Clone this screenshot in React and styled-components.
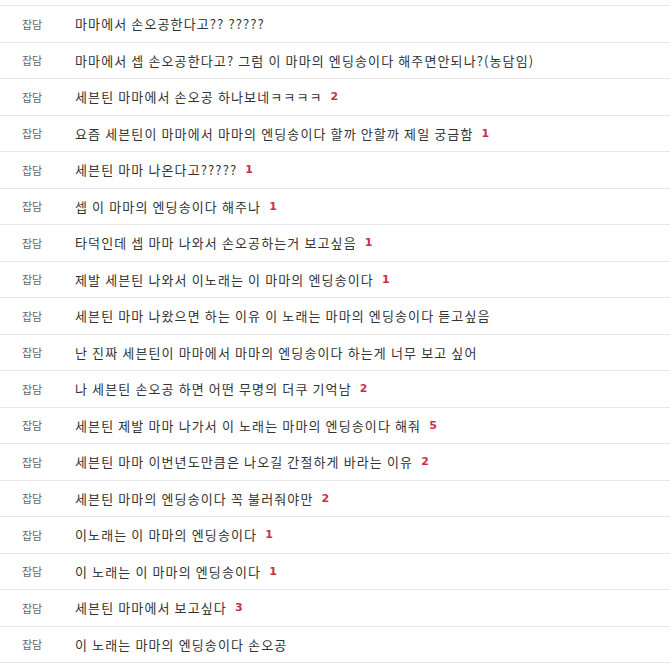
import React from "react";
import styled, { createGlobalStyle } from "styled-components";

const Global = createGlobalStyle`
  html, body { margin: 0; padding: 0; background: #fff; }
  body { font-family: "Noto Sans CJK KR", "Noto Sans", sans-serif; }
`;

const List = styled.ul`
  list-style: none;
  margin: 5px 0 0;
  padding: 0;
  width: 670px;
  border-bottom: 1px solid #e6e6e6;
`;

const Row = styled.li`
  display: flex;
  align-items: center;
  height: 35.5px;
  border-top: 1px solid #e6e6e6;
`;

const Category = styled.span`
  flex: 0 0 64px;
  text-align: center;
  font-size: 11px;
  color: #666;
`;

const Title = styled.a`
  margin-left: 11px;
  font-size: 13px;
  letter-spacing: 1.12px;
  color: #333;
  text-decoration: none;
  white-space: nowrap;
`;

const Count = styled.span`
  margin-left: 8px;
  font-family: "DejaVu Sans", sans-serif;
  font-weight: bold;
  font-size: 11px;
  color: #c8304a;
`;

const rows = [
  ["마마에서 손오공한다고?? ?????"],
  ["마마에서 셉 손오공한다고? 그럼 이 마마의 엔딩송이다 해주면안되나?(농담임)"],
  ["세븐틴 마마에서 손오공 하나보네ㅋㅋㅋㅋ", 2],
  ["요즘 세븐틴이 마마에서 마마의 엔딩송이다 할까 안할까 제일 궁금함", 1],
  ["세븐틴 마마 나온다고?????", 1],
  ["셉 이 마마의 엔딩송이다 해주나", 1],
  ["타덕인데 셉 마마 나와서 손오공하는거 보고싶음", 1],
  ["제발 세븐틴 나와서 이노래는 이 마마의 엔딩송이다", 1],
  ["세븐틴 마마 나왔으면 하는 이유 이 노래는 마마의 엔딩송이다 듣고싶음"],
  ["난 진짜 세븐틴이 마마에서 마마의 엔딩송이다 하는게 너무 보고 싶어"],
  ["나 세븐틴 손오공 하면 어떤 무명의 더쿠 기억남", 2],
  ["세븐틴 제발 마마 나가서 이 노래는 마마의 엔딩송이다 해줘", 5],
  ["세븐틴 마마 이번년도만큼은 나오길 간절하게 바라는 이유", 2],
  ["세븐틴 마마의 엔딩송이다 꼭 불러줘야만", 2],
  ["이노래는 이 마마의 엔딩송이다", 1],
  ["이 노래는 이 마마의 엔딩송이다", 1],
  ["세븐틴 마마에서 보고싶다", 3],
  ["이 노래는 마마의 엔딩송이다 손오공"],
];

export default function App() {
  return (
    <>
      <Global />
      <List>
        {rows.map(([title, count], i) => (
          <Row key={i}>
            <Category>잡담</Category>
            <Title href="#">{title}</Title>
            {count ? <Count>{count}</Count> : null}
          </Row>
        ))}
      </List>
    </>
  );
}
